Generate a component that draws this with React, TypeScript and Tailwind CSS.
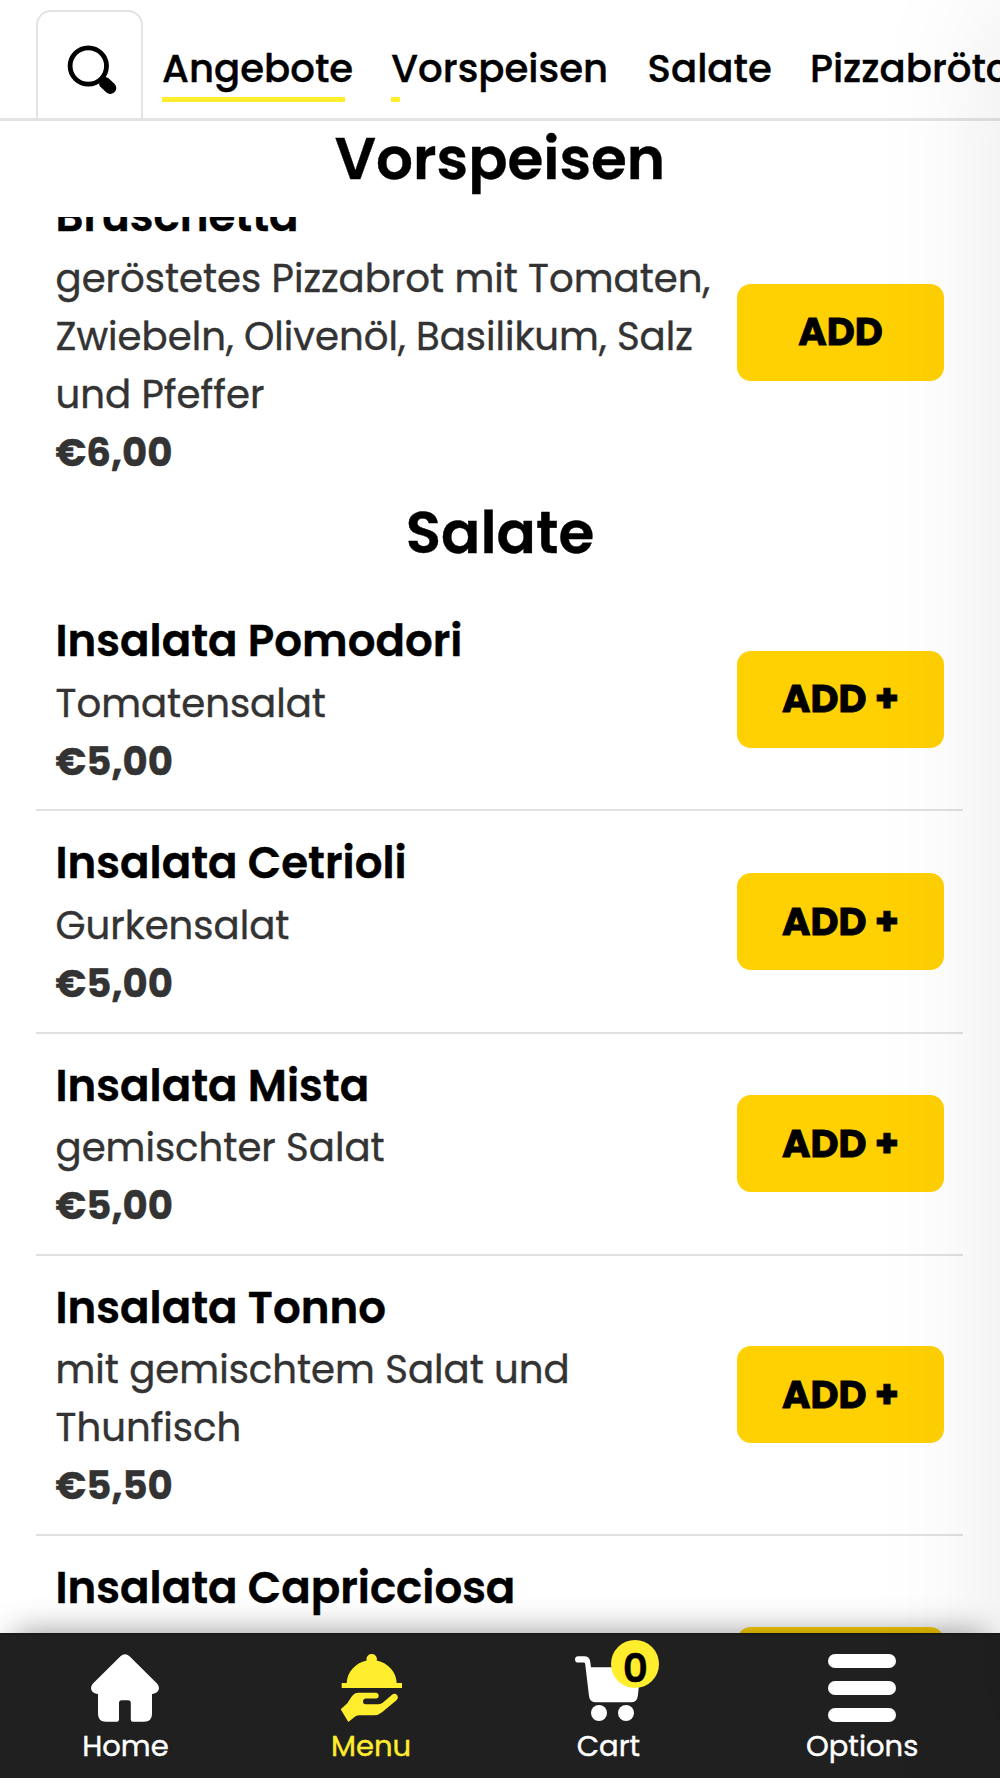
import type { ReactNode } from "react";

type Item = {
  name: string;
  lines: string[];
  price: string;
  action: string;
};

const tabs = [
  { label: "Angebote", className: "w-[190px]", bar: "w-[183px]" },
  { label: "Vorspeisen", className: "w-[217px]", bar: "w-[9px]" },
  { label: "Salate", className: "w-[123px]", bar: "w-0" },
  { label: "Pizzabrötchen", className: "w-[260px]", bar: "w-0" },
];

const starters: Item[] = [
  {
    name: "Bruschetta",
    lines: ["geröstetes Pizzabrot mit Tomaten,", "Zwiebeln, Olivenöl, Basilikum, Salz", "und Pfeffer"],
    price: "€6,00",
    action: "ADD",
  },
];

const salads: Item[] = [
  { name: "Insalata Pomodori", lines: ["Tomatensalat"], price: "€5,00", action: "ADD +" },
  { name: "Insalata Cetrioli", lines: ["Gurkensalat"], price: "€5,00", action: "ADD +" },
  { name: "Insalata Mista", lines: ["gemischter Salat"], price: "€5,00", action: "ADD +" },
  { name: "Insalata Tonno", lines: ["mit gemischtem Salat und", "Thunfisch"], price: "€5,50", action: "ADD +" },
];

function SearchIcon() {
  return (
    <svg viewBox="0 0 50 50" className="mt-[9px] ml-[4px] h-[50px] w-[50px]" fill="none" stroke="currentColor" aria-hidden>
      <circle cx="21.3" cy="21" r="18.2" strokeWidth="4.8" />
      <path d="M33 33L36 36" strokeWidth="8" />
      <path d="M38 38L43.3 43" strokeWidth="12" strokeLinecap="round" />
    </svg>
  );
}

function HomeIcon() {
  return (
    <svg viewBox="0 0 68 68" className="h-[68px] w-[68px]" fill="currentColor" aria-hidden>
      <path d="M29.5 2.2Q34 -1.8 38.5 2.2L66 29.5C70 34 67.5 39.8 61 40V60Q61 67.7 53 67.7H42Q39.8 67.7 39.8 65.5V49Q39.8 46.2 37 46.2H30.8Q28 46.2 28 49V65.5Q28 67.7 25.8 67.7H15Q7 67.7 7 60V40C.5 39.8 -2 34 2 29.5Z" />
    </svg>
  );
}

function MenuIcon() {
  return (
    <svg viewBox="0 0 62 68" className="h-[68px] w-[62px]" fill="currentColor" aria-hidden>
      <path d="M26.7 6.6A5.2 5.2 0 1 1 36.7 6.6C48.5 9 56.3 18.5 56.7 29H62V34H1.7V29H6.7C7.2 18.5 15 9 26.7 6.6Z" />
      <path d="M.7 55.3L7.3 49.3L11.7 42.5Q14.3 38.7 18.3 38.7H36.3A3 3 0 0 1 36.3 44.6H25.3A2.9 2.9 0 0 0 25.3 50.3H38.5Q41 50.3 43 48.5L52 40.8Q54.5 38.8 56.6 40.5Q59.2 43.5 56.5 46.2L42 58.3Q38.5 61.3 34 61.3H20Q17.3 61.3 15.5 62.3L8.3 68Z" />
    </svg>
  );
}

function CartIcon() {
  return (
    <svg viewBox="0 0 68 68" className="h-[68px] w-[68px]" fill="currentColor" aria-hidden>
      <path d="M4.2 2.3H10Q15.5 2.3 16.2 7.5L17 13.3H67L63.8 42Q63 48.3 57 48.3H22Q15.7 48.3 15 42L11.2 10Q11 8.6 9.7 8.6H4.2A3.15 3.15 0 0 1 4.2 2.3Z" />
      <circle cx="25" cy="59" r="8" />
      <circle cx="52" cy="59" r="8" />
    </svg>
  );
}

function OptionsIcon() {
  return (
    <div className="flex h-[68px] w-[68px] flex-col justify-between">
      <span className="h-[14px] rounded-full bg-current" />
      <span className="h-[14px] rounded-full bg-current" />
      <span className="h-[14px] rounded-full bg-current" />
    </div>
  );
}

function SectionTitle({ children }: { children: ReactNode }) {
  return (
    <h2 className="relative z-10 h-[96px] bg-white text-center text-[58px] leading-[75px] font-semibold text-black">
      {children}
    </h2>
  );
}

function MenuRow({ item }: { item: Item }) {
  return (
    <li className="flex items-center justify-between border-b-[2px] border-[#e0e0e0] py-[19px] pr-[19px] pl-[19.5px] last:border-b-0">
      <div className="whitespace-nowrap">
        <h3 className="text-[43.5px] leading-[66.6px] font-semibold text-black">{item.name}</h3>
        {item.lines.map((line) => (
          <p key={line} className="text-[38.67px] leading-[58px] text-[#333]">
            {line}
          </p>
        ))}
        <p className="text-[38.67px] leading-[57.6px] font-bold text-[#333]">{item.price}</p>
      </div>
      <AddButton label={item.action} />
    </li>
  );
}

function AddButton({ label }: { label: string }) {
  return (
    <button className="h-[97px] w-[207px] shrink-0 rounded-[14px] bg-[#ffd103] text-[38.6px] font-bold text-black [-webkit-text-stroke:0.9px]">
      {label}
    </button>
  );
}

function NavItem({ icon, label, className }: { icon: ReactNode; label: string; className: string }) {
  return (
    <a href="#" className={`flex flex-col items-center pt-[19px] ${className}`}>
      {icon}
      <span className="mt-[2.5px] text-[29px] leading-[42px] whitespace-nowrap">{label}</span>
    </a>
  );
}

export default function App() {
  return (
    <div className="relative flex h-[1778px] w-[1000px] flex-col overflow-hidden bg-white font-['Poppins','Inter',sans-serif] text-black [-webkit-text-stroke:0.4px]">
      <header className="flex h-[121px] shrink-0 items-end border-b-[3px] border-[#e3e3e3] pl-[36px]">
        <button className="flex h-[108px] w-[107px] shrink-0 items-center justify-center rounded-t-[15px] border-2 border-b-0 border-[#e3e3e3]">
          <SearchIcon />
        </button>
        <nav className="flex h-full gap-[39.3px] pt-[39px] pl-[19px]">
          {tabs.map((tab) => (
            <a key={tab.label} href="#" className={`shrink-0 text-[38.67px] font-medium whitespace-nowrap ${tab.className}`}>
              <span className="block h-[58px] leading-[60px]">{tab.label}</span>
              <span className={`block h-[4.5px] bg-[#ffed2e] ${tab.bar}`} />
            </a>
          ))}
        </nav>
      </header>

      <main className="min-h-0 flex-1 overflow-hidden">
        <section>
          <SectionTitle>Vorspeisen</SectionTitle>
          <ul className="-mt-[53px] mr-[37px] ml-[36px]">
            {starters.map((item) => (
              <MenuRow key={item.name} item={item} />
            ))}
          </ul>
        </section>
        <section className="-mt-[5px]">
          <SectionTitle>Salate</SectionTitle>
          <ul className="-mt-[2px] mr-[37px] ml-[36px]">
            {salads.map((item) => (
              <MenuRow key={item.name} item={item} />
            ))}
            <li className="flex justify-between pt-[19px] pr-[19px] pl-[19.5px]">
              <h3 className="text-[43.5px] leading-[66.6px] font-semibold text-black">Insalata Capricciosa</h3>
              <div className="pt-[72px]">
                <AddButton label="" />
              </div>
            </li>
          </ul>
        </section>
      </main>

      <footer className="relative z-20 flex h-[145px] shrink-0 justify-around border-t-2 border-[#191b19] bg-[#202020] pl-px text-white shadow-[0_-15px_30px_-15px_rgba(0,0,0,0.42)]">
        <NavItem icon={<HomeIcon />} label="Home" className="w-[85px]" />
        <NavItem icon={<MenuIcon />} label="Menu" className="w-[79px] text-[#ffed2e]" />
        <NavItem
          label="Cart"
          className="w-[68px]"
          icon={
            <div className="relative">
              <CartIcon />
              <span className="absolute -top-[14px] left-[37px] flex h-[48px] w-[48px] items-center justify-center rounded-full bg-[#ffed2e] pt-[9px] text-[39px] leading-none font-semibold text-black">
                0
              </span>
            </div>
          }
        />
        <NavItem icon={<OptionsIcon />} label="Options" className="w-[112px]" />
      </footer>

      {/* closed drawer parked off the right edge, only its shadow shows */}
      <aside className="pointer-events-none absolute inset-y-0 left-full z-30 w-[600px] shadow-[0_0_128px_rgba(0,0,0,0.09)]" />
    </div>
  );
}
